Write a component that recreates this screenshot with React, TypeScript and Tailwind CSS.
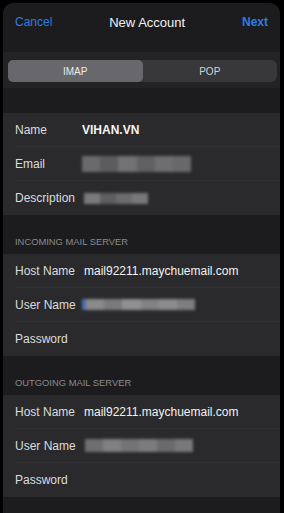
import React from "react";

const font = { fontFamily: '"Liberation Sans", Arial, sans-serif' };

function Blur({ w, h, tones, cursor }: { w: number; h: number; tones: string[]; cursor?: boolean }) {
  return (
    <div className="flex items-center blur-[1.5px]" style={{ width: w, height: h }}>
      {cursor && <div className="h-full w-[4px] bg-[#4b6fb5]" />}
      {tones.map((c, i) => (
        <div key={i} className="h-full flex-1" style={{ backgroundColor: c }} />
      ))}
    </div>
  );
}

function Row({ label, children, last }: { label: string; children?: React.ReactNode; last?: boolean }) {
  return (
    <div className="flex h-[34px] items-center pl-[12px]">
      <div className={"flex h-full flex-1 items-center " + (last ? "" : "border-b border-[#303032]")}>
        <span className="w-[67px] shrink-0 text-[12px] text-[#dcdcde]">{label}</span>
        {children}
      </div>
    </div>
  );
}

function SectionTitle({ text }: { text: string }) {
  return (
    <div className="flex h-[39px] items-end pb-[5px] pl-[12px] text-[9.4px] text-[#8b8b8f]">
      {text}
    </div>
  );
}

export default function App() {
  return (
    <div className="h-[513px] w-[284px] overflow-hidden bg-black" style={font}>
      <div className="ml-[3px] mr-[4px] mt-[3px] h-[510px] overflow-hidden rounded-t-[10px] bg-[#1c1c1e]">
        {/* nav */}
        <div className="flex h-[49px] items-start justify-between px-[12px] pt-[12px] text-[12px] leading-[15px]">
          <span className="text-[#2b7de3]">Cancel</span>
          <span className="text-[13px] font-medium text-[#f2f2f2]">New Account</span>
          <span className="font-bold text-[#2b7de3]">Next</span>
        </div>

        {/* segmented control */}
        <div className="bg-[#232325] pb-[6px] pl-[5px] pr-[3px] pt-[8px]">
          <div className="flex h-[22px] rounded-[6px] bg-[#38383a] text-[10px]">
            <div className="flex flex-1 items-center justify-center rounded-[5px] bg-[#68686c] text-[#ececec]">
              IMAP
            </div>
            <div className="flex flex-1 items-center justify-center text-[#d4d4d6]">POP</div>
          </div>
        </div>

        <div className="h-[25px]" />

        <div className="bg-[#2a2a2c]">
          <Row label="Name">
            <span className="text-[12px] font-bold text-[#f4f4f4]">VIHAN.VN</span>
          </Row>
          <Row label="Email">
            <div>
              <Blur w={109} h={16} tones={["#6a6a6c", "#5c5c5e", "#727274", "#606062", "#6e6e70", "#68686a"]} />
            </div>
          </Row>
          <Row label="Description" last>
            <div className="ml-[2px]">
              <Blur w={64} h={11} tones={["#7a7a7c", "#5e5e60", "#6c6c6e", "#78787a"]} />
            </div>
          </Row>
        </div>

        <SectionTitle text="INCOMING MAIL SERVER" />
        <div className="bg-[#2a2a2c]">
          <Row label="Host Name">
            <span className="ml-[2px] text-[12px] text-[#f2f2f2]">mail92211.maychuemail.com</span>
          </Row>
          <Row label="User Name">
            <div>
              <Blur w={113} h={11} cursor tones={["#8a8a8c", "#7a7a7c", "#909092", "#828284", "#8c8c8e", "#7e7e80"]} />
            </div>
          </Row>
          <Row label="Password" last />
        </div>

        <SectionTitle text="OUTGOING MAIL SERVER" />
        <div className="bg-[#2a2a2c]">
          <Row label="Host Name">
            <span className="ml-[2px] text-[12px] text-[#f2f2f2]">mail92211.maychuemail.com</span>
          </Row>
          <Row label="User Name">
            <div className="ml-[3px]">
              <Blur w={108} h={13} tones={["#6e6e70", "#808082", "#747476", "#7c7c7e", "#6a6a6c", "#787879"]} />
            </div>
          </Row>
          <Row label="Password" last />
        </div>
      </div>
    </div>
  );
}
